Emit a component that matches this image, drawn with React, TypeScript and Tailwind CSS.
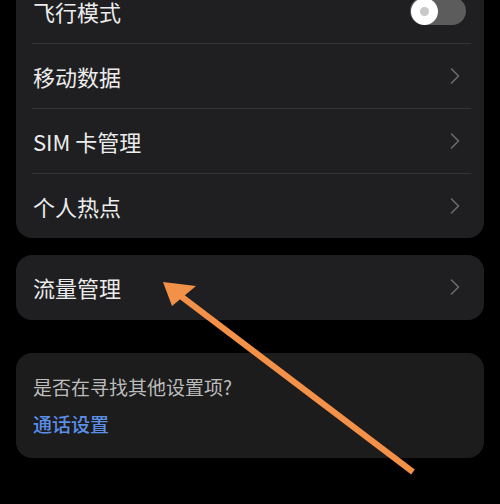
import { ChevronRight } from 'lucide-react'

const font = { fontFamily: '"Noto Sans CJK SC", "Noto Sans", sans-serif' }

function Row({ label, toggle, last }: { label: string; toggle?: boolean; last?: boolean }) {
  return (
    <div className="flex flex-col">
      <div className="h-16 flex items-center justify-between pl-[17px] pr-[15px]">
        <span className="text-[22px] text-[#ececec] leading-none">{label}</span>
        {toggle ? (
          <div className="w-[56px] h-[28px] rounded-full bg-[#5c5c5c] flex items-center pl-[1px] mr-[3px]">
            <div className="w-[27px] h-[27px] rounded-full bg-white flex items-center justify-center">
              <div className="w-[9px] h-[9px] rounded-full bg-[#c8c8c8]" />
            </div>
          </div>
        ) : (
          <ChevronRight className="w-[28px] h-[28px] text-[#6a6a6a]" strokeWidth={1.4} />
        )}
      </div>
      {!last && <div className="h-px bg-[#343436] ml-4 mr-[13px]" />}
    </div>
  )
}

export default function App() {
  return (
    <div className="relative w-[500px] h-[504px] bg-black overflow-hidden" style={font}>
      <div className="flex flex-col px-4 -mt-[21px]">
        <div className="bg-[#1f1f21] rounded-[16px] flex flex-col">
          <Row label="飞行模式" toggle />
          <Row label="移动数据" />
          <Row label="SIM 卡管理" />
          <Row label="个人热点" last />
        </div>

        <div className="bg-[#1f1f21] rounded-[16px] mt-[17px] h-[65px]">
          <Row label="流量管理" last />
        </div>

        <div className="bg-[#1c1c1d] rounded-[16px] mt-[33px] h-[105px] pl-[17px] pt-[21px] flex flex-col gap-[11px]">
          <span className="text-[19px] leading-[26px] text-[#bcbcbc]">是否在寻找其他设置项?</span>
          <span className="text-[19px] leading-[26px] text-[#5b8ee6] font-medium">通话设置</span>
        </div>
      </div>

      <svg className="absolute inset-0 pointer-events-none" width="500" height="504" viewBox="0 0 500 504">
        <line x1="413" y1="472" x2="178" y2="294" stroke="#f39149" strokeWidth="6" strokeLinecap="butt" />
        <polygon points="163,282 196,286 172,306" fill="#f39149" />
      </svg>
    </div>
  )
}
